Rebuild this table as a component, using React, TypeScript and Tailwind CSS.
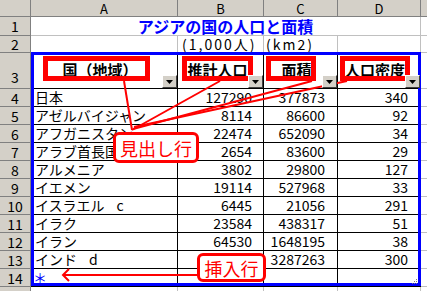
type Item = {
  n: number;
  name: string;
  mark?: string;
  pop: string;
  area: string;
  dens: string;
};

const items: Item[] = [
  { n: 4, name: "日本", pop: "127290", area: "377873", dens: "340" },
  { n: 5, name: "アゼルバイジャン", pop: "8114", area: "86600", dens: "92" },
  { n: 6, name: "アフガニスタン", pop: "22474", area: "652090", dens: "34" },
  { n: 7, name: "アラブ首長国連邦", pop: "2654", area: "83600", dens: "29" },
  { n: 8, name: "アルメニア", pop: "3802", area: "29800", dens: "127" },
  { n: 9, name: "イエメン", pop: "19114", area: "527968", dens: "33" },
  { n: 10, name: "イスラエル", mark: "c", pop: "6445", area: "21056", dens: "291" },
  { n: 11, name: "イラク", pop: "23584", area: "438317", dens: "51" },
  { n: 12, name: "イラン", pop: "64530", area: "1648195", dens: "38" },
  { n: 13, name: "インド", mark: "d", pop: "1027015", area: "3287263", dens: "300" },
];

function RowHead({ label, className = "" }: { label?: string; className?: string }) {
  return (
    <div
      className={`flex w-[31px] shrink-0 justify-center border-r border-b border-[#808080] bg-[#d4d0c8] text-[14px] leading-none ${className}`}
    >
      {label}
    </div>
  );
}

function Drop() {
  return (
    <div className="absolute bottom-0 right-0 z-10 flex h-[13px] w-[15px] items-center justify-center border border-t-white border-l-white border-r-[#404040] border-b-[#404040] bg-[#d4d0c8]">
      <svg width="7" height="4" viewBox="0 0 7 4">
        <polygon points="0,0 7,0 3.5,4" fill="#000" />
      </svg>
    </div>
  );
}

function DataRow({ item }: { item: Item }) {
  return (
    <div className="flex h-[18px]">
      <RowHead label={String(item.n)} className="items-center" />
      <div className="flex w-[147px] shrink-0 items-center overflow-hidden whitespace-nowrap border-r border-b border-black pl-[4px] text-[14px]">
        {item.name}
        {item.mark && <span className="ml-[12px]">{item.mark}</span>}
      </div>
      <div className="flex w-[86px] shrink-0 items-center justify-end whitespace-nowrap border-r border-b border-black pr-[11px] text-[14px]">
        {item.pop}
      </div>
      <div className="flex w-[74px] shrink-0 items-center justify-end whitespace-nowrap border-r border-b border-black pr-[12px] text-[14px]">
        {item.area}
      </div>
      <div className="flex w-[83px] shrink-0 items-center justify-end whitespace-nowrap border-r border-b border-black pr-[12px] text-[14px]">
        {item.dens}
      </div>
      <div className="flex-1 border-b border-[#c0c0c0]" />
    </div>
  );
}

export default function App() {
  return (
    <div className="relative h-[291px] w-[427px] overflow-hidden bg-white text-black [font-family:'Noto_Sans_CJK_JP',sans-serif]">
      {/* column letters */}
      <div className="flex h-[17px] bg-[#d4d0c8] text-[13px] leading-none">
        <div className="w-[31px] shrink-0 border-r border-b border-[#808080]" />
        <div className="flex w-[147px] shrink-0 items-center justify-center border-r border-b border-[#808080]">A</div>
        <div className="flex w-[86px] shrink-0 items-center justify-center border-r border-b border-[#808080]">B</div>
        <div className="flex w-[74px] shrink-0 items-center justify-center border-r border-b border-[#808080]">C</div>
        <div className="flex w-[83px] shrink-0 items-center justify-center border-r border-b border-[#808080]">D</div>
        <div className="flex-1 border-b border-[#808080]" />
      </div>

      {/* row 1: title */}
      <div className="flex h-[19px]">
        <RowHead label="1" className="items-center" />
        <div className="flex w-[390px] shrink-0 items-center justify-center border-r border-b border-[#c0c0c0] text-[16px] font-bold text-[#0000ff]">
          アジアの国の人口と面積
        </div>
        <div className="flex-1 border-b border-[#c0c0c0]" />
      </div>

      {/* row 2: units */}
      <div className="flex h-[17px] text-[14px]">
        <RowHead label="2" className="items-center" />
        <div className="w-[147px] shrink-0 border-r border-b border-[#c0c0c0]" />
        <div className="flex w-[86px] shrink-0 items-center whitespace-nowrap border-r border-b border-[#c0c0c0] pl-[4px] tracking-[2px]">
          (1,000人)
        </div>
        <div className="flex w-[74px] shrink-0 items-center whitespace-nowrap border-r border-b border-[#c0c0c0] pl-[2px] tracking-[2px]">
          (km2)
        </div>
        <div className="w-[83px] shrink-0 border-r border-b border-[#c0c0c0]" />
        <div className="flex-1 border-b border-[#c0c0c0]" />
      </div>

      {/* row 3: list headers */}
      <div className="flex h-[36px] text-[15px] font-bold">
        <RowHead label="3" className="items-end pb-[4px] font-normal" />
        <div className="relative flex w-[147px] shrink-0 items-center justify-center border-r border-b border-black pr-[8px]">
          国（地域）
          <Drop />
        </div>
        <div className="relative flex w-[86px] shrink-0 items-center justify-center whitespace-nowrap border-r border-b border-black pr-[6px]">
          推計人口
          <Drop />
        </div>
        <div className="relative flex w-[74px] shrink-0 items-center justify-center border-r border-b border-black pr-[8px]">
          面積
          <Drop />
        </div>
        <div className="relative flex w-[83px] shrink-0 items-center justify-center whitespace-nowrap border-r border-b border-black pr-[8px]">
          人口密度
          <Drop />
        </div>
        <div className="flex-1 border-b border-[#c0c0c0]" />
      </div>

      {items.map((item) => (
        <DataRow key={item.n} item={item} />
      ))}

      {/* row 14: insert row */}
      <div className="flex h-[18px]">
        <RowHead label="14" className="items-center" />
        <div className="flex w-[147px] shrink-0 items-center border-r border-b border-black pl-[2px] text-[14px] text-[#0000ff]">
          ＊
        </div>
        <div className="w-[86px] shrink-0 border-r border-b border-black" />
        <div className="w-[74px] shrink-0 border-r border-b border-black" />
        <div className="w-[83px] shrink-0 border-r border-b border-black" />
        <div className="flex-1 border-b border-[#c0c0c0]" />
      </div>

      {/* row 15 (cut off) */}
      <div className="flex h-[18px]">
        <RowHead label="15" className="items-center" />
        <div className="w-[147px] shrink-0 border-r border-[#c0c0c0]" />
        <div className="w-[86px] shrink-0 border-r border-[#c0c0c0]" />
        <div className="w-[74px] shrink-0 border-r border-[#c0c0c0]" />
        <div className="w-[83px] shrink-0 border-r border-[#c0c0c0]" />
        <div className="flex-1" />
      </div>

      {/* list outline */}
      <div className="pointer-events-none absolute left-[31px] top-[52px] h-[234px] w-[390px] border-[3px] border-[#0000ff]" />
      <svg className="pointer-events-none absolute left-[411px] top-[278px]" width="7" height="7" viewBox="0 0 7 7">
        <g fill="#808080">
          <rect x="5" y="1" width="1" height="1" />
          <rect x="3" y="3" width="1" height="1" />
          <rect x="5" y="3" width="1" height="1" />
          <rect x="1" y="5" width="1" height="1" />
          <rect x="3" y="5" width="1" height="1" />
          <rect x="5" y="5" width="1" height="1" />
        </g>
      </svg>

      {/* red highlight boxes */}
      <div className="pointer-events-none absolute left-[43px] top-[56px] h-[25px] w-[107px] border-[5px] border-[#ff0000]" />
      <div className="pointer-events-none absolute left-[182px] top-[56px] h-[25px] w-[71px] border-[5px] border-[#ff0000]" />
      <div className="pointer-events-none absolute left-[266px] top-[56px] h-[25px] w-[50px] border-[5px] border-[#ff0000]" />
      <div className="pointer-events-none absolute left-[340px] top-[56px] h-[25px] w-[70px] border-[5px] border-[#ff0000]" />

      {/* leader lines */}
      <svg className="pointer-events-none absolute left-0 top-0" width="427" height="291" viewBox="0 0 427 291">
        <g stroke="#ff0000" strokeWidth="2" fill="none">
          <line x1="124" y1="81" x2="132" y2="130" />
          <line x1="220" y1="81" x2="132" y2="130" />
          <line x1="312" y1="81" x2="133" y2="129" />
          <line x1="347" y1="81" x2="134" y2="127" />
          <line x1="197" y1="275" x2="63" y2="275" />
          <polyline points="69,269 63,275 69,281" />
        </g>
      </svg>

      {/* callouts */}
      <div className="absolute left-[113px] top-[132px] flex h-[31px] w-[86px] items-center justify-center rounded-[6px] border-[3px] border-[#ff0000] bg-white text-[18px] leading-none text-[#ff0000]">
        見出し行
      </div>
      <div className="absolute left-[197px] top-[253px] flex h-[29px] w-[69px] items-center justify-center rounded-[6px] border-[3px] border-[#ff0000] bg-white text-[18px] leading-none text-[#ff0000]">
        挿入行
      </div>
    </div>
  );
}
